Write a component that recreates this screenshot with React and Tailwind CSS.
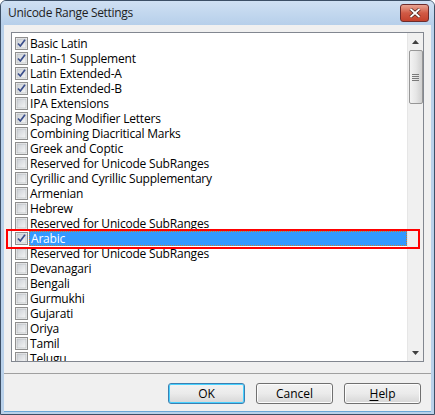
import React from 'react';

const items = [
  ['Basic Latin', true],
  ['Latin-1 Supplement', true],
  ['Latin Extended-A', true],
  ['Latin Extended-B', true],
  ['IPA Extensions', false],
  ['Spacing Modifier Letters', true],
  ['Combining Diacritical Marks', false],
  ['Greek and Coptic', false],
  ['Reserved for Unicode SubRanges', false],
  ['Cyrillic and Cyrillic Supplementary', false],
  ['Armenian', false],
  ['Hebrew', false],
  ['Reserved for Unicode SubRanges', false],
  ['Arabic', true],
  ['Reserved for Unicode SubRanges', false],
  ['Devanagari', false],
  ['Bengali', false],
  ['Gurmukhi', false],
  ['Gujarati', false],
  ['Oriya', false],
  ['Tamil', false],
  ['Telugu', false],
];

function CheckBox({ checked }) {
  return (
    <svg width="13" height="13" viewBox="0 0 13 13" className="shrink-0">
      <defs>
        <linearGradient id="cbg" x1="0" y1="0" x2="1" y2="1">
          <stop offset="0" stopColor="#cbcfd5" />
          <stop offset="1" stopColor="#f6f6f6" />
        </linearGradient>
      </defs>
      <rect x="0.5" y="0.5" width="12" height="12" fill="#f4f4f4" stroke="#8f8f8f" />
      <rect x="2" y="2" width="9" height="9" fill="url(#cbg)" stroke="#b0b4ba" strokeWidth="0.6" />
      {checked && (
        <path d="M3 6.5 L5.3 9 L10 2.8" fill="none" stroke="#3b4f8c" strokeWidth="1.7" strokeLinejoin="round" />
      )}
    </svg>
  );
}

function Btn({ children, primary }) {
  return (
    <div
      className={`w-[77px] h-[21px] flex items-center justify-center rounded-[3px] border text-[12px] text-black bg-gradient-to-b from-[#f2f2f2] via-[#ebebeb] to-[#d6d6d6] ${
        primary ? 'border-[#3c7fb1] shadow-[inset_0_0_0_1px_#48d1ff]' : 'border-[#707070] shadow-[inset_0_0_0_1px_#fcfcfc]'
      }`}
    >
      {children}
    </div>
  );
}

export default function App() {
  return (
    <div
      className="relative w-[435px] h-[415px] bg-[#b9d1ea] border border-[#3c4f66] rounded-t-[6px] overflow-hidden flex flex-col"
      style={{ fontFamily: '"Open Sans", "Noto Sans", sans-serif' }}
    >
      {/* title bar */}
      <div className="h-[24px] shrink-0 flex items-center justify-between pl-[7px] pr-[5px] bg-gradient-to-b from-[#cfe0f3] to-[#b6cfea]">
        <span className="text-[12px] text-[#1e1e1e] tracking-[-0.3px]">Unicode Range Settings</span>
        <div className="w-[29px] h-[18px] mt-[-1px] rounded-[3px] border border-[#6d2c2c] bg-gradient-to-b from-[#e8a493] via-[#d15a45] to-[#c4412c] flex items-center justify-center">
          <svg width="12" height="10" viewBox="0 0 12 10">
            <path d="M1.5 1 L10.5 9 M10.5 1 L1.5 9" stroke="#3a1a15" strokeWidth="3.2" />
            <path d="M1.5 1 L10.5 9 M10.5 1 L1.5 9" stroke="#ffffff" strokeWidth="1.8" />
          </svg>
        </div>
      </div>

      {/* client area */}
      <div className="flex-1 mx-[3px] mb-[2px] bg-[#f0f0f0] flex flex-col border-b border-[#6aa6d6]">
        <div className="mt-[7px] mx-[7px] h-[330px] border border-[#828790] bg-white flex">
          <div className="flex-1 pt-[3px] pl-[3px] overflow-hidden">
            {items.map(([label, checked], i) => {
              const sel = label === 'Arabic';
              return (
                <div key={i} className="h-[15px] flex items-center">
                  <CheckBox checked={checked} />
                  <div
                    className={`ml-[1px] h-[15px] flex items-center pl-[1px] text-[12px] leading-[13px] whitespace-nowrap tracking-[-0.2px] ${
                      sel ? 'flex-1 bg-[#3399ff] text-white border border-dotted border-[#c88030]' : 'text-black'
                    }`}
                  >
                    {label}
                  </div>
                </div>
              );
            })}
          </div>
          {/* scrollbar */}
          <div className="w-[16px] bg-[#f0f0f0] border-l border-[#e6e6e6] flex flex-col items-center">
            <div className="h-[17px] flex items-center justify-center">
              <svg width="7" height="4" viewBox="0 0 7 4">
                <path d="M0 4 L3.5 0 L7 4 Z" fill="#404040" />
              </svg>
            </div>
            <div className="w-[14px] h-[54px] rounded-[2px] border border-[#979797] bg-gradient-to-r from-[#f3f3f3] via-[#e6e6e6] to-[#d0d0d0] flex flex-col items-center justify-center gap-[1px]">
              <div className="w-[7px] h-[1px] bg-[#7a7a7a]" />
              <div className="w-[7px] h-[1px] bg-[#7a7a7a]" />
              <div className="w-[7px] h-[1px] bg-[#7a7a7a]" />
              <div className="w-[7px] h-[1px] bg-[#7a7a7a]" />
            </div>
            <div className="flex-1" />
            <div className="h-[17px] flex items-center justify-center">
              <svg width="7" height="4" viewBox="0 0 7 4">
                <path d="M0 0 L3.5 4 L7 0 Z" fill="#404040" />
              </svg>
            </div>
          </div>
        </div>
        <div className="mt-[11px] h-[1px] bg-[#a0a0a0]" />
        <div className="flex justify-end gap-[11px] pr-[10px] pt-[9px]">
          <Btn primary>OK</Btn>
          <Btn>Cancel</Btn>
          <Btn>
            <span className="underline underline-offset-2">H</span>elp
          </Btn>
        </div>
      </div>

      {/* annotation */}
      <div className="absolute left-[5px] top-[228px] w-[414px] h-[20px] border-2 border-[#ff0000]" />
    </div>
  );
}
